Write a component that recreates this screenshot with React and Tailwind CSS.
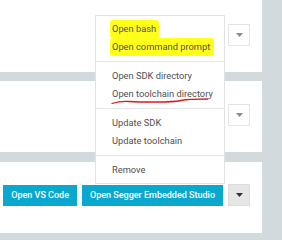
import React from 'react';

const Caret = ({ dark }) => (
  <svg width="7" height="4" viewBox="0 0 7 4">
    <path d="M0 0h7L3.5 4z" fill={dark ? '#333' : '#8a8a8a'} />
  </svg>
);

const CaretButton = ({ active }) => (
  <button
    className={`w-[22px] h-[22px] shrink-0 flex items-center justify-center border ${
      active ? 'bg-[#e6e6e6] border-[#dcdcdc]' : 'bg-white border-[#e4e4e4]'
    }`}
  >
    <Caret dark={active} />
  </button>
);

const BlueButton = ({ children, className = '' }) => (
  <button
    className={`h-[21px] px-[8px] bg-[#0aa8cf] text-white text-[9px] font-medium whitespace-nowrap leading-none shrink-0 ${className}`}
  >
    {children}
  </button>
);

const Card = ({ className, children }) => (
  <div className={`w-[262px] bg-white flex items-center justify-end pr-[12px] overflow-hidden ${className}`}>
    {children}
  </div>
);

const Item = ({ children }) => (
  <div className="h-[18px] flex items-center pl-4 text-[9.3px] text-[#4f4f4f] whitespace-nowrap">{children}</div>
);

const Divider = () => <div className="my-[5px] h-px bg-[#e6e6e6]" />;

export default function App() {
  return (
    <div
      className="relative w-[282px] h-[240px] bg-[#d3dade] overflow-hidden"
      style={{ fontFamily: 'Roboto, "Liberation Sans", sans-serif' }}
    >
      <div className="flex flex-col">
        <Card className="h-[72px] pb-[3px]">
          <CaretButton />
        </Card>
        <Card className="h-[71px] mt-[9px] pb-[4px]">
          <CaretButton />
        </Card>
        <Card className="h-[71px] mt-[10px] pb-[5px] gap-[5px]">
          {/* previous button, scrolled off the left edge */}
          <BlueButton className="w-[40px]" />
          <BlueButton>Open VS Code</BlueButton>
          <BlueButton>Open Segger Embedded Studio</BlueButton>
          <CaretButton active />
        </Card>
      </div>

      <div className="absolute left-[95px] top-[15px] w-[130px] bg-white border border-[#e2e2e2] py-[4px]">
        <Item>
          <span className="bg-[#ffff1a] -ml-[2px] pl-[2px] pr-[3px] py-[2px] rounded-[3px]">Open bash</span>
        </Item>
        <Item>
          <span className="bg-[#ffff1a] -ml-[2px] pl-[2px] pr-[4px] py-[2px] rounded-[3px]">Open command prompt</span>
        </Item>
        <Divider />
        <Item>Open SDK directory</Item>
        <Item>Open toolchain directory</Item>
        <Divider />
        <Item>Update SDK</Item>
        <Item>Update toolchain</Item>
        <Divider />
        <Item>Remove</Item>
        <svg className="absolute left-0 top-0 pointer-events-none" width="130" height="169" viewBox="0 0 130 169">
          <path
            d="M16 87.5 Q 24 85 33 85.5 T 60 86 T 85 84.5 T 112 83"
            fill="none"
            stroke="#e4161b"
            strokeWidth="1.3"
            strokeLinecap="round"
          />
        </svg>
      </div>
    </div>
  );
}
